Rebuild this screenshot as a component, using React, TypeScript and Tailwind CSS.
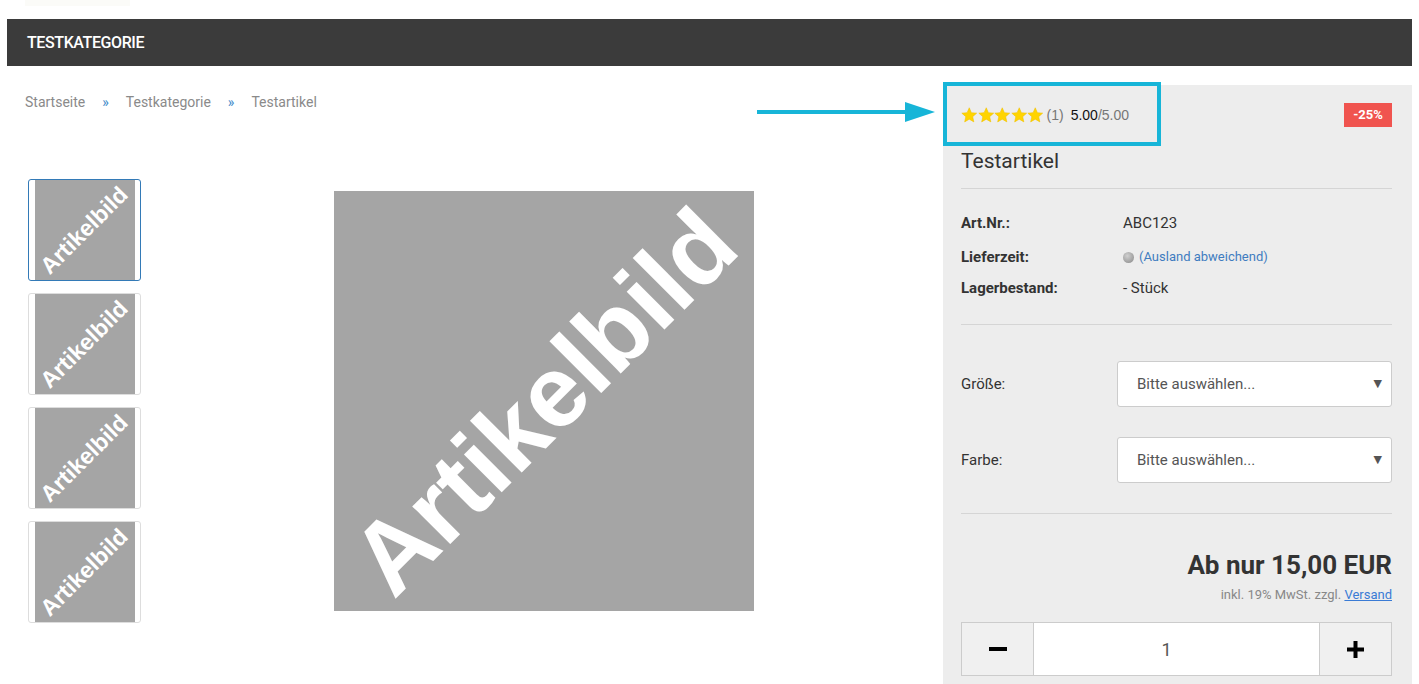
import React from "react";

const Star = () => (
  <svg width="16.5" height="16" viewBox="0 0 24 23" className="block">
    <path
      d="M12 1l3.1 7.1 7.7.7-5.8 5.1 1.7 7.6L12 17.6 5.3 21.5 7 13.9 1.2 8.8l7.7-.7z"
      fill="#ffd400"
      stroke="#f0c000"
      strokeWidth="0.8"
    />
  </svg>
);

function Thumb({ active }: { active?: boolean }) {
  return (
    <div
      className={
        active
          ? "w-[113px] h-[102px] rounded-[3px] border border-[#337ab7] bg-white flex items-center justify-center"
          : "w-[113px] h-[102px] rounded-[3px] border border-[#dddddd] bg-white flex items-center justify-center"
      }
    >
      <div className="w-[100px] h-[100px] bg-[#a5a5a5] flex items-center justify-center">
        <span className="-rotate-45 text-white font-bold text-[23px] leading-none font-['Liberation_Sans',Arial,sans-serif] whitespace-nowrap">
          Artikelbild
        </span>
      </div>
    </div>
  );
}

function InfoRow({ label, children, cls }: { label: string; children: React.ReactNode; cls: string }) {
  return (
    <div className={cls}>
      <div className="w-[162px] font-bold text-[15px] text-[#333333]">{label}</div>
      <div className="flex items-center">{children}</div>
    </div>
  );
}

function SelectRow({ label, cls }: { label: string; cls: string }) {
  return (
    <div className={cls}>
      <div className="w-[156px] text-[15px] text-[#333333]">{label}</div>
      <div className="w-[275px] h-[46px] bg-white border border-[#cccccc] rounded-[3px] flex items-center justify-between pl-[19px] pr-[9px] text-[15px] text-[#555555]">
        <span>Bitte auswählen...</span>
        <span className="text-[11px] text-[#555555] font-['DejaVu_Sans',sans-serif]">▼</span>
      </div>
    </div>
  );
}

export default function App() {
  return (
    <div className="relative w-[1419px] h-[684px] overflow-hidden bg-white font-['Roboto',sans-serif]">
      <div className="ml-[25px] w-[105px] h-[6px] bg-[#fbfbf8]" />
      <div className="mx-[7px] mt-[13px]">
        <div className="h-[47px] bg-[#3b3b3b] flex items-center pl-[20px] text-white text-[16px] font-medium tracking-[-0.4px]">
          TESTKATEGORIE
        </div>
        <div className="flex">
          <div className="flex-1 pl-[18px]">
            <div className="mt-[26px] h-[20px] flex items-center text-[14px] text-[#8a8a8a]">
              <span>Startseite</span>
              <span className="mx-[17px] text-[#428bca]">»</span>
              <span>Testkategorie</span>
              <span className="mx-[17px] text-[#428bca]">»</span>
              <span>Testartikel</span>
            </div>
            <div className="flex items-start">
              <div className="ml-[3px] mt-[67px] flex flex-col gap-[12px]">
                <Thumb active />
                <Thumb />
                <Thumb />
                <Thumb />
              </div>
              <div className="ml-[193px] mt-[79px] w-[420px] h-[420px] bg-[#a5a5a5] flex items-center justify-center">
                <span className="-rotate-45 text-white font-bold text-[101px] leading-none font-['Liberation_Sans',Arial,sans-serif] whitespace-nowrap">
                  Artikelbild
                </span>
              </div>
            </div>
          </div>

          <div className="w-[469px] mt-[19px] h-[620px] bg-[#ededed] pl-[18px] pr-[20px] pt-[18px]">
            <div className="h-[24px] flex items-center justify-between">
              <div className="flex items-center font-['Liberation_Sans',Arial,sans-serif] text-[14px]">
                <div className="flex">
                  <Star />
                  <Star />
                  <Star />
                  <Star />
                  <Star />
                </div>
                <span className="ml-[3px] text-[#777777]">(1)</span>
                <span className="ml-[7px] text-[#111111]">5.00</span>
                <span className="text-[#777777]">/5.00</span>
              </div>
              <div className="w-[48px] h-[24px] bg-[#f0544f] text-white font-bold text-[13px] flex items-center justify-center">
                -25%
              </div>
            </div>
            <div className="mt-[20px] text-[21px] leading-[28px] text-[#333333]">Testartikel</div>
            <div className="mt-[13px] border-t border-[#d5d5d5]" />

            <InfoRow label="Art.Nr.:" cls="mt-[22px] h-[24px] flex items-center">
              <span className="text-[15px] text-[#333333]">ABC123</span>
            </InfoRow>
            <InfoRow label="Lieferzeit:" cls="mt-[10px] h-[24px] flex items-center">
              <span className="w-[11px] h-[11px] rounded-full bg-[radial-gradient(circle_at_40%_35%,#d0d0d0,#888888)] mr-[5px]" />
              <span className="text-[13px] text-[#3f7cc0]">(Ausland abweichend)</span>
            </InfoRow>
            <InfoRow label="Lagerbestand:" cls="mt-[7px] h-[24px] flex items-center">
              <span className="text-[15px] text-[#333333]">- Stück</span>
            </InfoRow>
            <div className="mt-[24px] border-t border-[#d5d5d5]" />

            <SelectRow label="Größe:" cls="mt-[36px] flex items-center" />
            <SelectRow label="Farbe:" cls="mt-[30px] flex items-center" />
            <div className="mt-[30px] border-t border-[#d5d5d5]" />

            <div className="mt-[36px] text-right text-[26px] font-bold leading-[30px] text-[#333333]">
              Ab nur 15,00 EUR
            </div>
            <div className="mt-[7px] text-right text-[13px] leading-[16px] text-[#888888]">
              inkl. 19% MwSt. zzgl. <span className="text-[#3a7bd5] underline">Versand</span>
            </div>

            <div className="mt-[19px] h-[54px] flex border border-[#cccccc]">
              <div className="w-[72px] bg-[#f0f0f0] border-r border-[#cccccc] flex items-center justify-center">
                <div className="w-[18px] h-[4px] bg-black" />
              </div>
              <div className="flex-1 bg-white flex items-center justify-center pr-[20px] text-[18px] text-[#555555]">1</div>
              <div className="w-[72px] bg-[#f0f0f0] border-l border-[#cccccc] flex items-center justify-center">
                <svg width="17" height="17" viewBox="0 0 17 17">
                  <rect x="0" y="6.5" width="17" height="4" fill="#000" />
                  <rect x="6.5" y="0" width="4" height="17" fill="#000" />
                </svg>
              </div>
            </div>
          </div>
        </div>
      </div>

      {/* annotation overlay */}
      <div className="absolute left-[943px] top-[82px] w-[218px] h-[64px] border-[4px] border-[#17b5d8]" />
      <svg className="absolute left-[757px] top-[101px]" width="180" height="22" viewBox="0 0 180 22">
        <rect x="0" y="9" width="152" height="4" fill="#17b5d8" />
        <polygon points="148,1 178,11 148,21" fill="#17b5d8" />
      </svg>
    </div>
  );
}
